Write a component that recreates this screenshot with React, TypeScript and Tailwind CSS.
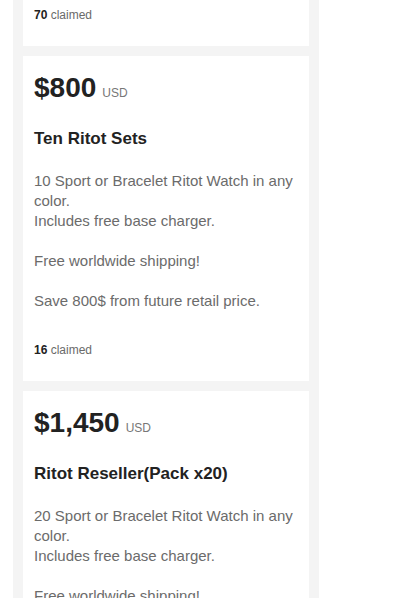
import React from "react";

type Reward = {
  price: string;
  title: string;
  lines: string[];
  claimed: number;
};

const rewards: Reward[] = [
  {
    price: "$800",
    title: "Ten Ritot Sets",
    lines: [
      "10 Sport or Bracelet Ritot Watch in any color.",
      "Includes free base charger.",
      "",
      "Free worldwide shipping!",
      "",
      "Save 800$ from future retail price.",
    ],
    claimed: 16,
  },
  {
    price: "$1,450",
    title: "Ritot Reseller(Pack x20)",
    lines: [
      "20 Sport or Bracelet Ritot Watch in any color.",
      "Includes free base charger.",
      "",
      "Free worldwide shipping!",
      "",
      "Save 1600$ from future retail price.",
    ],
    claimed: 4,
  },
];

function Claimed({ n }: { n: number }) {
  return (
    <div className="text-[12px] leading-[16px] text-[#6a6a6a]">
      <span className="font-bold text-[#222222]">{n}</span> claimed
    </div>
  );
}

function Card({ r }: { r: Reward }) {
  return (
    <div className="bg-white px-[11px] pt-[18px] pb-[23px]">
      <div className="flex items-baseline h-[28px] leading-[28px]">
        <span className="text-[28px] font-bold text-[#222222]">{r.price}</span>
        <span className="ml-[6px] text-[12px] text-[#777777]">USD</span>
      </div>
      <div className="mt-[25px] text-[17px] leading-[24px] font-bold text-[#222222]">
        {r.title}
      </div>
      <div className="mt-[20px] text-[15px] leading-[20px] text-[#6b6b6b]">
        {r.lines.map((l, i) => (
          <div key={i} className="min-h-[20px]">
            {l}
          </div>
        ))}
      </div>
      <div className="mt-[31px]">
        <Claimed n={r.claimed} />
      </div>
    </div>
  );
}

export default function App() {
  return (
    <div
      className="h-[598px] w-[413px] overflow-hidden bg-white"
      style={{ fontFamily: '"Liberation Sans", Arial, sans-serif' }}
    >
      <div className="ml-[13px] w-[306px] h-full bg-[#f4f4f4] px-[10px] flex flex-col gap-[10px]">
        <div className="bg-white px-[11px] pt-[7px] pb-[23px]">
          <Claimed n={70} />
        </div>
        {rewards.map((r, i) => (
          <Card key={i} r={r} />
        ))}
      </div>
    </div>
  );
}
